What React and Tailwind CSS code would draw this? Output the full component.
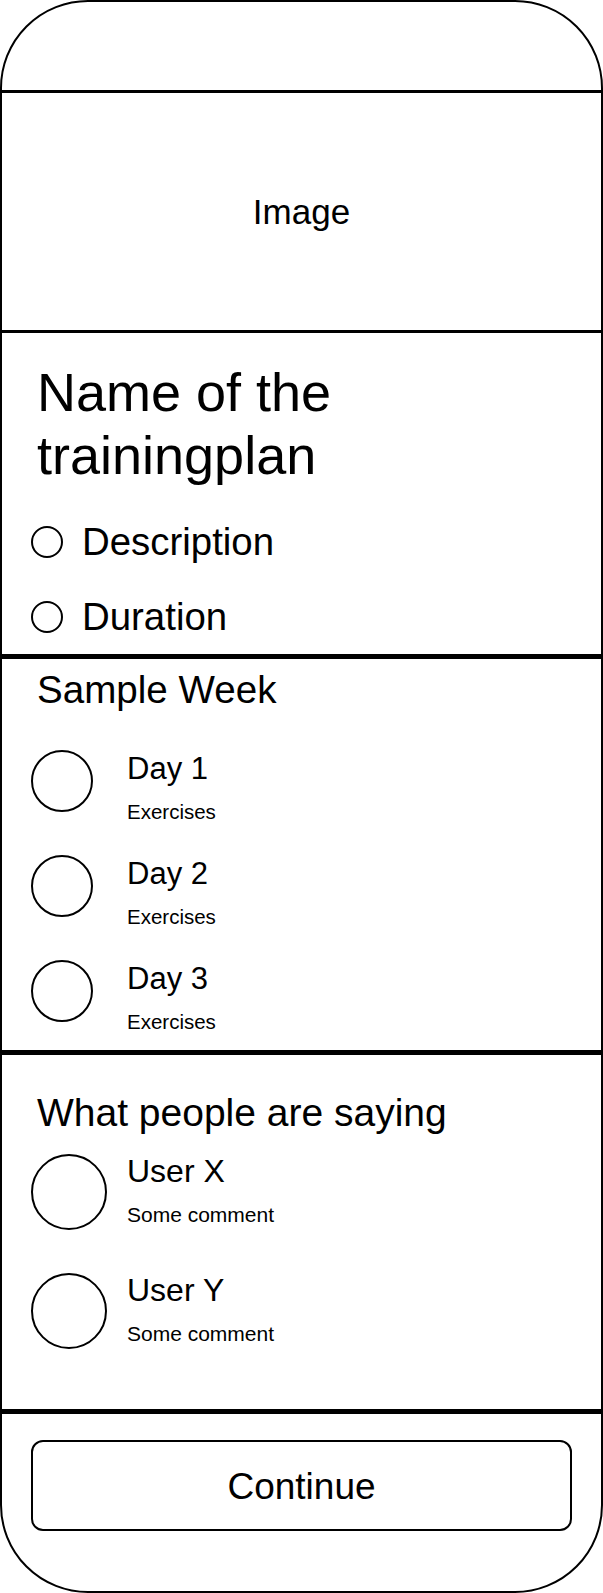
import React from 'react';

const DAYS = ['Day 1', 'Day 2', 'Day 3'];
const REVIEWS = ['User X', 'User Y'];

function Circle({ className }) {
  return <div className={`shrink-0 rounded-full border-[2.5px] border-black ${className}`} />;
}

export default function App() {
  return (
    <div className="w-[603px] h-[1593px] bg-white text-black font-['Liberation_Sans',Arial,sans-serif]">
      <div className="w-full h-full flex flex-col border-2 border-black rounded-[88px] overflow-hidden">
        {/* top bar */}
        <div className="h-[91px] shrink-0 border-b-[3px] border-black" />

        {/* image placeholder */}
        <div className="h-[240px] shrink-0 border-b-[3px] border-black flex items-center justify-center">
          <span className="text-[35px] leading-[42px]">Image</span>
        </div>

        {/* plan info */}
        <div className="h-[326px] shrink-0 border-b-[5px] border-black pt-[28px] pl-[29px]">
          <h1 className="ml-[6px] text-[54px] leading-[63px] font-normal">
            Name of the
            <br />
            trainingplan
          </h1>
          <div className="mt-[32px] flex items-center gap-[19px]">
            <Circle className="w-[32px] h-[32px]" />
            <span className="text-[38.4px] leading-[46px]">Description</span>
          </div>
          <div className="mt-[29px] flex items-center gap-[19px]">
            <Circle className="w-[32px] h-[32px]" />
            <span className="text-[38.4px] leading-[46px]">Duration</span>
          </div>
        </div>

        {/* sample week */}
        <div className="h-[396px] shrink-0 border-b-[5px] border-black pt-[8px] pl-[29px]">
          <h2 className="ml-[6px] text-[38.6px] leading-[46px] font-normal">Sample Week</h2>
          <div className="mt-[37px] flex flex-col gap-[31px]">
            {DAYS.map((day) => (
              <div key={day} className="flex items-start gap-[34px]">
                <Circle className="w-[62px] h-[62px]" />
                <div>
                  <div className="text-[31px] leading-[37px]">{day}</div>
                  <div className="mt-[12px] text-[20.5px] leading-[25px]">Exercises</div>
                </div>
              </div>
            ))}
          </div>
        </div>

        {/* reviews */}
        <div className="h-[359px] shrink-0 border-b-[5px] border-black pt-[35px] pl-[29px]">
          <h2 className="ml-[6px] text-[39px] leading-[46px] font-normal">What people are saying</h2>
          <div className="mt-[16px] flex flex-col gap-[41px]">
            {REVIEWS.map((user) => (
              <div key={user} className="flex items-start gap-[20px]">
                <Circle className="mt-[2px] w-[76px] h-[76px]" />
                <div>
                  <div className="text-[32px] leading-[38px]">{user}</div>
                  <div className="mt-[12px] text-[21px] leading-[25px]">Some comment</div>
                </div>
              </div>
            ))}
          </div>
        </div>

        {/* footer */}
        <div className="flex-1 px-[29px] pt-[26px]">
          <button className="w-full h-[91px] border-2 border-black rounded-[12px] bg-white text-[37px] leading-[44px] pt-[3px] flex items-center justify-center">
            Continue
          </button>
        </div>
      </div>
    </div>
  );
}
